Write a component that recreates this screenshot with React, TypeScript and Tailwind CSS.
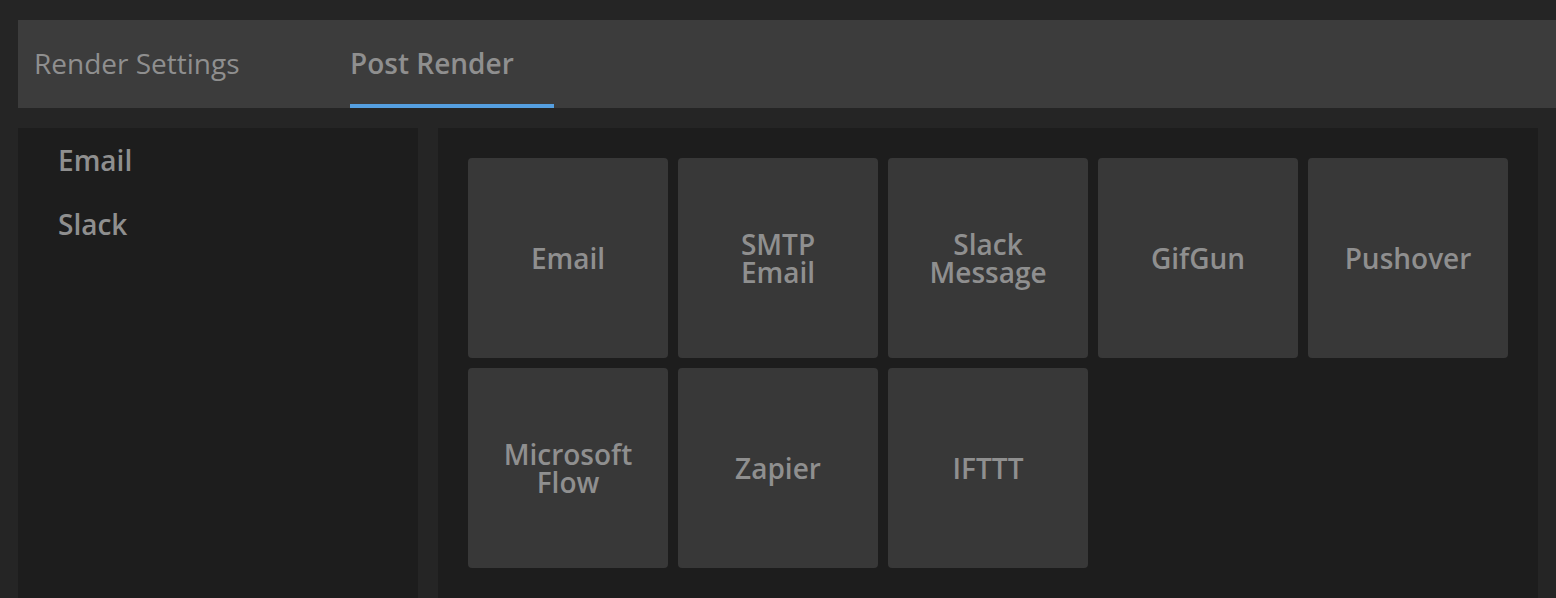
import React from "react";

const tiles: string[][] = [
  ["Email"],
  ["SMTP", "Email"],
  ["Slack", "Message"],
  ["GifGun"],
  ["Pushover"],
  ["Microsoft", "Flow"],
  ["Zapier"],
  ["IFTTT"],
];

export default function App() {
  return (
    <div
      className="w-[1556px] h-[598px] overflow-hidden bg-[#252525] pt-[20px] pl-[18px] flex flex-col"
      style={{ fontFamily: '"Open Sans", "Noto Sans", sans-serif' }}
    >
      <div className="h-[88px] bg-[#3c3c3c] flex items-stretch shrink-0">
        <div className="ml-[16px] w-[316px] flex items-center pb-[2px] text-[28px] text-[#8f8f8f]">
          Render Settings
        </div>
        <div className="relative w-[204px] flex items-center pb-[2px] text-[28px] font-semibold text-[#8f8f8f]">
          Post Render
          <div className="absolute left-0 right-0 bottom-0 h-[4px] bg-[#559fe0]" />
        </div>
      </div>
      <div className="flex gap-[20px] mt-[20px] flex-1 min-h-0">
        <div className="w-[400px] bg-[#1d1d1d] pt-[10px] pl-[40px] flex flex-col">
          <div className="h-[44px] flex items-center text-[28px] font-semibold text-[#8f8f8f]">Email</div>
          <div className="h-[20px]" />
          <div className="h-[44px] flex items-center text-[28px] font-semibold text-[#8f8f8f]">Slack</div>
        </div>
        <div className="w-[1100px] bg-[#1d1d1d] p-[30px]">
          <div className="grid grid-cols-[repeat(5,200px)] gap-[10px]">
            {tiles.map((t, i) => (
              <div
                key={i}
                className="w-[200px] h-[200px] rounded-[4px] bg-[#383838] flex flex-col items-center justify-center text-[28px] font-semibold leading-[28px] text-[#8f8f8f] text-center"
              >
                {t.map((l, j) => (
                  <span key={j}>{l}</span>
                ))}
              </div>
            ))}
          </div>
        </div>
      </div>
    </div>
  );
}
